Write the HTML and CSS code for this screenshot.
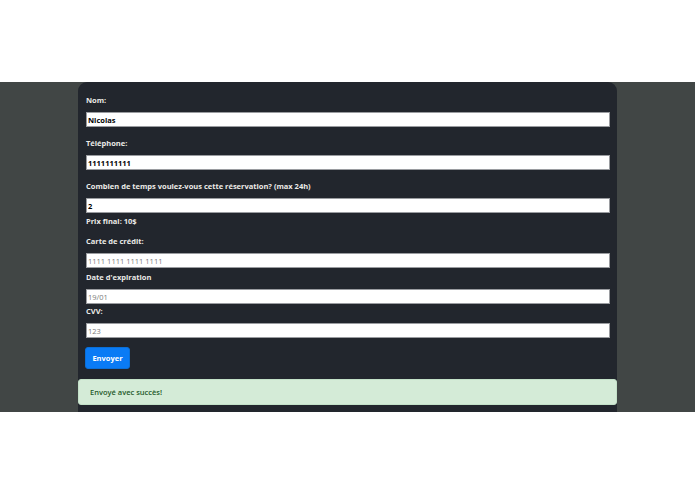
FILE: index.html
```html
<!DOCTYPE html>
<html lang="fr">
<head>
<meta charset="utf-8">
<link rel="stylesheet" href="styles.css">
</head>
<body>
<div class="top"></div>
<div class="band">
  <div class="card">
    <form class="form">
      <div class="group">
        <label class="label">Nom:</label>
        <input class="input" type="text" value="Nicolas">
      </div>
      <div class="group">
        <label class="label">Téléphone:</label>
        <input class="input" type="text" value="1111111111">
      </div>
      <div class="group tight">
        <label class="label">Combien de temps voulez-vous cette réservation? (max 24h)</label>
        <input class="input" type="text" value="2">
      </div>
      <p class="price">Prix final: 10$</p>
      <div class="group card-group">
        <label class="label">Carte de crédit:</label>
        <input class="input" type="text" placeholder="1111 1111 1111 1111">
      </div>
      <div class="group date-group">
        <label class="label">Date d'expiration</label>
        <input class="input" type="text" placeholder="19/01">
      </div>
      <div class="group tight">
        <label class="label">CVV:</label>
        <input class="input" type="text" placeholder="123">
      </div>
      <button class="btn" type="button">Envoyer</button>
    </form>
    <div class="alert">Envoyé avec succès!</div>
  </div>
</div>
</body>
</html>
```
FILE: styles.css
```css
* { box-sizing: border-box; }
html, body { margin: 0; padding: 0; background: #ffffff; }
body { font-family: "Open Sans", "DejaVu Sans", sans-serif; }
.top { height: 82px; }
.band {
  height: 330px;
  background: #414645;
  overflow: hidden;
  padding-left: 78px;
}
.card {
  width: 539px;
  height: 360px;
  background: #22262d;
  border-radius: 9px 9px 0 0;
}
.form {
  padding: 12px 7px 0 8px;
}
.group { margin-bottom: 10px; }
.group.tight { margin-bottom: 0; }
.group.card-group { margin-bottom: 3px; }
.group.date-group { margin-bottom: 1px; }
.label {
  display: block;
  color: #ecebe8;
  font-size: 7.5px;
  font-weight: 700;
  line-height: 12px;
  margin-bottom: 6px;
}
.input {
  display: block;
  width: 100%;
  height: 15px;
  margin: 0;
  padding: 0 1px;
  border: 1px solid #9a9ca0;
  border-radius: 0;
  background: #ffffff;
  font-family: inherit;
  font-size: 7.5px;
  font-weight: 700;
  color: #000000;
  outline: none;
}
.input::placeholder { color: #7a7a7a; font-weight: 400; }
.price {
  margin: 2px 0 8px;
  color: #ecebe8;
  font-size: 7.5px;
  font-weight: 700;
  line-height: 12px;
}
.btn {
  display: block;
  margin-top: 9px;
  margin-left: -1px;
  width: 45px;
  height: 22px;
  padding: 0;
  border: 1px solid #0a6fd8;
  border-radius: 3px;
  background: #0a7bf5;
  color: #ffffff;
  font-family: inherit;
  font-size: 7.5px;
  font-weight: 700;
}
.alert {
  margin-top: 10px;
  height: 26px;
  padding: 0 11px;
  display: flex;
  align-items: center;
  background: #d4ebd7;
  border: 1px solid #c3e1c8;
  border-radius: 3px;
  color: #1f5a2a;
  font-size: 7.5px;
  font-weight: 600;
}
```
